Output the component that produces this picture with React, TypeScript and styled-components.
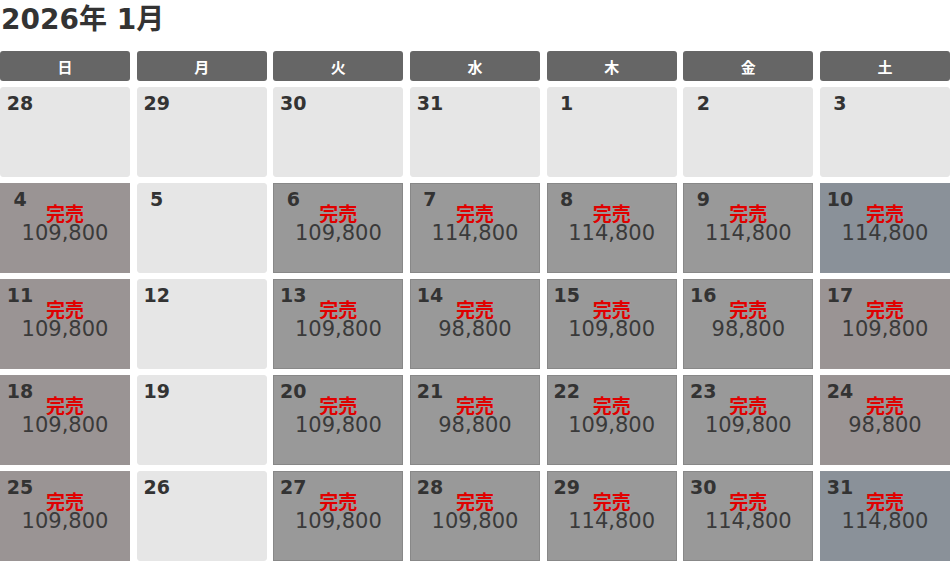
import styled, { createGlobalStyle } from "styled-components";

const GlobalStyle = createGlobalStyle`
  html, body {
    margin: 0;
    padding: 0;
    background: #fff;
  }
  body {
    font-family: "DejaVu Sans", "Noto Sans CJK JP", sans-serif;
    color: #333;
  }
`;

const Page = styled.div`
  width: 950px;
  height: 561px;
  overflow: hidden;
`;

const Title = styled.h1`
  margin: 0;
  box-sizing: border-box;
  height: 51px;
  padding: 5px 0 0 1px;
  font-size: 28px;
  line-height: 30px;
  font-weight: bold;
  color: #333;
`;

const Grid = styled.div`
  display: grid;
  grid-template-columns: repeat(7, 1fr);
  grid-template-rows: 30px repeat(5, 90px);
  column-gap: 6.67px;
  row-gap: 6px;
`;

const WeekHead = styled.div`
  background: #666;
  color: #fff;
  border-radius: 3px;
  display: flex;
  align-items: center;
  justify-content: center;
  font-size: 15px;
  font-weight: bold;
`;

type Tone = "empty" | "sun" | "day" | "sat";

const tones: Record<Tone, { bg: string; border: string; radius: string }> = {
  empty: { bg: "#e6e6e6", border: "#e6e6e6", radius: "3px" },
  sun: { bg: "#9a9494", border: "#9a9494", radius: "0" },
  day: { bg: "#999999", border: "#888888", radius: "0" },
  sat: { bg: "#8a9199", border: "#8a9199", radius: "0" },
};

const Cell = styled.div<{ $tone: Tone }>`
  box-sizing: border-box;
  background: ${(p) => tones[p.$tone].bg};
  border: 1px solid ${(p) => tones[p.$tone].border};
  border-radius: ${(p) => tones[p.$tone].radius};
  padding-top: 8px;
  display: flex;
  flex-direction: column;
`;

const DayNum = styled.div`
  width: 28px;
  margin-left: 5px;
  text-align: center;
  font-size: 19px;
  font-weight: bold;
  line-height: 15px;
  height: 15px;
  color: #333;
`;

const Sold = styled.div`
  margin-top: -4px;
  text-align: center;
  color: #e00000;
  font-size: 19px;
  font-weight: bold;
  line-height: 19px;
  font-family: "Noto Sans CJK JP", sans-serif;
`;

const Price = styled.div`
  text-align: center;
  font-size: 21px;
  line-height: 22px;
  color: #3a3a3a;
`;

interface Day {
  d: number;
  tone: Tone;
  price?: string;
}

const weeks: Day[][] = [
  [
    { d: 28, tone: "empty" },
    { d: 29, tone: "empty" },
    { d: 30, tone: "empty" },
    { d: 31, tone: "empty" },
    { d: 1, tone: "empty" },
    { d: 2, tone: "empty" },
    { d: 3, tone: "empty" },
  ],
  [
    { d: 4, tone: "sun", price: "109,800" },
    { d: 5, tone: "empty" },
    { d: 6, tone: "day", price: "109,800" },
    { d: 7, tone: "day", price: "114,800" },
    { d: 8, tone: "day", price: "114,800" },
    { d: 9, tone: "day", price: "114,800" },
    { d: 10, tone: "sat", price: "114,800" },
  ],
  [
    { d: 11, tone: "sun", price: "109,800" },
    { d: 12, tone: "empty" },
    { d: 13, tone: "day", price: "109,800" },
    { d: 14, tone: "day", price: "98,800" },
    { d: 15, tone: "day", price: "109,800" },
    { d: 16, tone: "day", price: "98,800" },
    { d: 17, tone: "sun", price: "109,800" },
  ],
  [
    { d: 18, tone: "sun", price: "109,800" },
    { d: 19, tone: "empty" },
    { d: 20, tone: "day", price: "109,800" },
    { d: 21, tone: "day", price: "98,800" },
    { d: 22, tone: "day", price: "109,800" },
    { d: 23, tone: "day", price: "109,800" },
    { d: 24, tone: "sun", price: "98,800" },
  ],
  [
    { d: 25, tone: "sun", price: "109,800" },
    { d: 26, tone: "empty" },
    { d: 27, tone: "day", price: "109,800" },
    { d: 28, tone: "day", price: "109,800" },
    { d: 29, tone: "day", price: "114,800" },
    { d: 30, tone: "day", price: "114,800" },
    { d: 31, tone: "sat", price: "114,800" },
  ],
];

const heads = ["日", "月", "火", "水", "木", "金", "土"];

function App() {
  return (
    <Page>
      <GlobalStyle />
      <Title>2026年 1月</Title>
      <Grid>
        {heads.map((h) => (
          <WeekHead key={h}>{h}</WeekHead>
        ))}
        {weeks.map((week, wi) =>
          week.map((day) => (
            <Cell key={`${wi}-${day.d}`} $tone={day.tone}>
              <DayNum>{day.d}</DayNum>
              {day.price && (
                <>
                  <Sold>完売</Sold>
                  <Price>{day.price}</Price>
                </>
              )}
            </Cell>
          ))
        )}
      </Grid>
    </Page>
  );
}

export default App;
